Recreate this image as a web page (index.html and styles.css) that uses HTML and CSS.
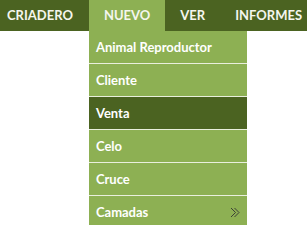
FILE: index.html
```html
<!DOCTYPE html>
<html>
<head>
<meta charset="utf-8">
<link rel="stylesheet" href="styles.css">
</head>
<body>
<nav class="bar">
  <div class="item first">CRIADERO</div>
  <div class="item active">NUEVO
    <ul class="menu">
      <li>Animal Reproductor</li>
      <li>Cliente</li>
      <li class="sel">Venta</li>
      <li>Celo</li>
      <li>Cruce</li>
      <li class="sub">Camadas
        <svg class="chev" width="10" height="11" viewBox="0 0 10 11"><path d="M1 1 L5.5 5.5 L1 10 M4.5 1 L9 5.5 L4.5 10" fill="none" stroke="#333333" stroke-width="0.9"/></svg>
      </li>
    </ul>
  </div>
  <div class="item">VER</div>
  <div class="item">INFORMES</div>
</nav>
</body>
</html>
```
FILE: styles.css
```css
html, body {
  margin: 0;
  padding: 0;
  background: #ffffff;
  overflow: hidden;
}
body {
  width: 307px;
  height: 225px;
  font-family: Lato, "Open Sans", sans-serif;
}
.bar {
  display: flex;
  height: 31px;
  background: #4b6321;
  white-space: nowrap;
}
.item {
  position: relative;
  padding: 0 15px;
  line-height: 31px;
  font-size: 13px;
  font-weight: 700;
  color: #f4f6ee;
}
.item.first {
  padding-left: 7px;
  padding-right: 16px;
}
.item.active {
  background: #8db053;
}
.menu {
  position: absolute;
  left: 0;
  top: 31px;
  width: 158px;
  margin: 0;
  padding: 0;
  list-style: none;
}
.menu li {
  display: flex;
  align-items: center;
  justify-content: space-between;
  height: 32px;
  padding: 0 7px 0 7px;
  border-bottom: 1px solid #e9efdd;
  background: #8db053;
  color: #ffffff;
  font-size: 13px;
  font-weight: 700;
  line-height: 32px;
}
.menu li.sel {
  background: #4b6321;
}
```
